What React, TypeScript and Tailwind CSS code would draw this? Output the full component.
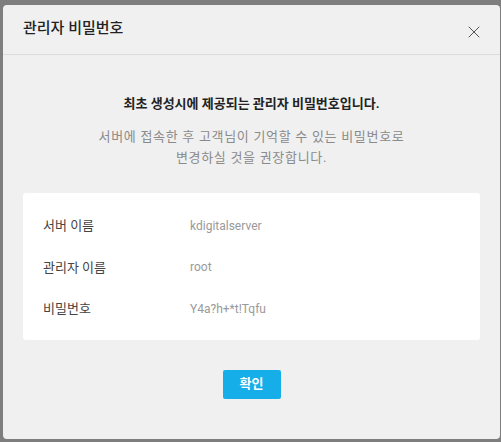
import { X } from "lucide-react";

const rows = [
  { label: "서버 이름", value: "kdigitalserver" },
  { label: "관리자 이름", value: "root" },
  { label: "비밀번호", value: "Y4a?h+*t!Tqfu" },
];

export default function App() {
  return (
    <div
      className="w-[501px] h-[442px] bg-[#7e7e7e] pl-[3px] pt-[5px] pb-[3px] pr-px overflow-hidden"
      style={{ fontFamily: 'Roboto, "Noto Sans CJK KR", sans-serif' }}
    >
      <div className="h-full flex flex-col rounded-[4px] bg-[#f0f0f0]">
        {/* Header */}
        <div className="h-[50px] flex items-center justify-between pl-[20px] pr-[16px] border-b border-[#dddddd]">
          <h2 className="text-[15px] font-medium text-[#222222] -mt-[2px]">
            관리자 비밀번호
          </h2>
          <button className="mt-[4px] text-[#444444]">
            <X size={20} strokeWidth={1.1} />
          </button>
        </div>

        {/* Body */}
        <div className="flex flex-col items-center pt-[39px]">
          <p className="text-[13px] leading-[20px] font-bold text-[#222222]">
            최초 생성시에 제공되는 관리자 비밀번호입니다.
          </p>
          <p className="mt-[12px] text-[13px] leading-[21px] tracking-[0.7px] text-[#8a8a8a] text-center">
            서버에 접속한 후 고객님이 기억할 수 있는 비밀번호로
            <br />
            변경하실 것을 권장합니다.
          </p>
        </div>

        <div className="mx-[20px] mt-[25px] bg-white rounded-[3px] pt-[12px] pb-[10px] px-[20px]">
          {rows.map((row) => (
            <div key={row.label} className="h-[41.5px] flex items-center">
              <span className="w-[147px] text-[13px] text-[#444444]">{row.label}</span>
              <span className="text-[12px] text-[#9a9a9a]">{row.value}</span>
            </div>
          ))}
        </div>

        <div className="flex justify-center mt-[30px]">
          <button className="w-[58px] h-[29px] rounded-[2px] bg-[#15aee9] text-white text-[13px] font-bold">
            확인
          </button>
        </div>
      </div>
    </div>
  );
}
